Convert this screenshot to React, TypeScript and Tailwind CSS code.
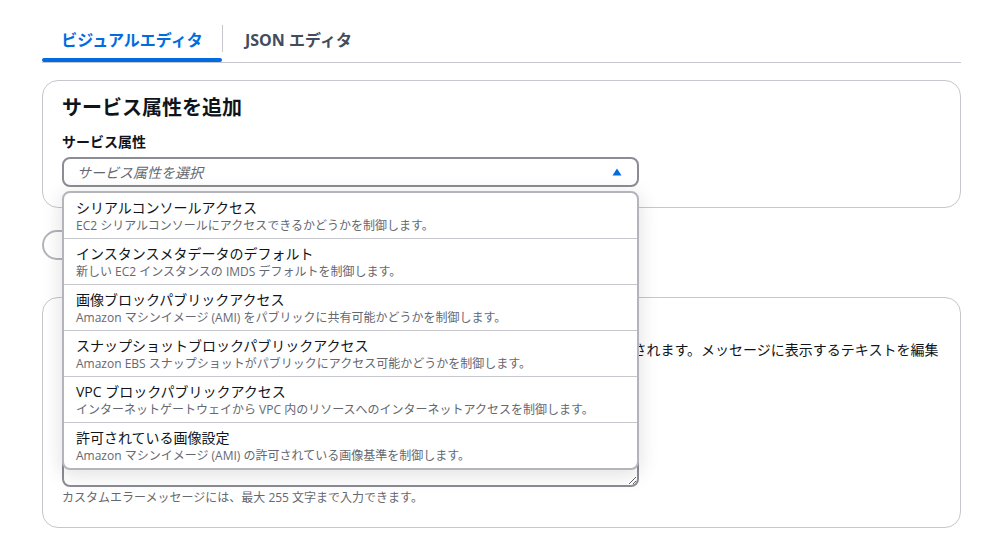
import React from 'react';

const FONT = "font-['Open_Sans','Noto_Sans_CJK_JP',sans-serif]";

const options = [
  {
    label: 'シリアルコンソールアクセス',
    description: 'EC2 シリアルコンソールにアクセスできるかどうかを制御します。',
  },
  {
    label: 'インスタンスメタデータのデフォルト',
    description: '新しい EC2 インスタンスの IMDS デフォルトを制御します。',
  },
  {
    label: '画像ブロックパブリックアクセス',
    description: 'Amazon マシンイメージ (AMI) をパブリックに共有可能かどうかを制御します。',
  },
  {
    label: 'スナップショットブロックパブリックアクセス',
    description: 'Amazon EBS スナップショットがパブリックにアクセス可能かどうかを制御します。',
  },
  {
    label: 'VPC ブロックパブリックアクセス',
    description: 'インターネットゲートウェイから VPC 内のリソースへのインターネットアクセスを制御します。',
  },
  {
    label: '許可されている画像設定',
    description: 'Amazon マシンイメージ (AMI) の許可されている画像基準を制御します。',
  },
];

const Tabs: React.FC = () => (
  <div className="flex h-[41px] border-b border-[#c6c6cd]">
    <div className="w-[180px] flex flex-col">
      <div className="flex-1 flex items-center justify-center text-[16px] font-bold text-[#006ce0]">
        ビジュアルエディタ
      </div>
      <div className="h-[4px] rounded-full bg-[#006ce0]" />
    </div>
    <div className="w-px h-[27px] mt-[3px] bg-[#c6c6cd]" />
    <div className="pl-[22px] pr-[21px] pb-[4px] flex items-center text-[16px] font-bold text-[#414d5c]">
      JSON エディタ
    </div>
  </div>
);

const ServiceDropdown: React.FC = () => (
  <div className="absolute top-[34px] left-0 right-0 z-10 bg-white border-2 border-[#b4b4bb] rounded-[8px] shadow-[0_4px_20px_1px_rgba(0,7,22,0.12)] overflow-hidden">
    {options.map((opt, i) => (
      <div
        key={opt.label}
        className={`px-[12px] pt-[5px] pb-[4px] ${i < options.length - 1 ? 'border-b border-[#c6c6cd]' : ''}`}
      >
        <div className="text-[14px] leading-[20px] text-[#0f141a]">{opt.label}</div>
        <div className="text-[12px] leading-[16px] text-[#656871]">{opt.description}</div>
      </div>
    ))}
  </div>
);

export default function App() {
  return (
    <div className={`${FONT} w-full h-[542px] overflow-hidden bg-white pl-[42px] pr-[30px] pt-[22px]`}>
      <Tabs />

      <div className="mt-[17px] rounded-[16px] border border-[#c6c6cd] px-[19px] pt-[15px] pb-[20px]">
        <h2 className="text-[20px] leading-[24px] font-bold text-[#0f141a]">サービス属性を追加</h2>
        <div className="mt-[12px] text-[14px] leading-[20px] font-bold text-[#0f141a]">サービス属性</div>
        <div className="relative mt-[5px] w-[577px]">
          <div className="h-[30px] border-2 border-[#8c8c94] rounded-[8px] flex items-center justify-between pl-[13px] pr-[15px]">
            <span className="text-[14px] italic text-[#656871]">サービス属性を選択</span>
            <svg width="10" height="8" viewBox="0 0 10 8">
              <path d="M5 0.5 L9.5 7.5 L0.5 7.5 Z" fill="#006ce0" />
            </svg>
          </div>
          <ServiceDropdown />
        </div>
      </div>

      <button className="mt-[22px] h-[30px] px-[18px] rounded-full border-2 border-[#b4b4bb] text-[14px] font-bold text-[#8c8c94] flex items-center">
        デフォルトにリセット
      </button>

      <div className="mt-[37px] rounded-[16px] border border-[#c6c6cd] px-[19px] pt-[15px] pb-[21px]">
        <h2 className="text-[20px] leading-[24px] font-bold text-[#0f141a]">カスタムエラーメッセージ</h2>
        <p className="mt-[3px] text-[14px] leading-[20px] text-[#0f141a]">
          ユーザーが、ポリシーで拒否されたアクションを実行すると、このエラーメッセージが表示されます。メッセージに表示するテキストを編集
          <br />
          できます。
        </p>
        <textarea
          className="block mt-[8px] w-[577px] h-[99px] border-2 border-[#8c8c94] rounded-[8px] resize-y px-[12px] py-[4px] text-[14px]"
          defaultValue=""
        />
        <div className="mt-[3px] text-[12px] leading-[16px] text-[#656871]">
          カスタムエラーメッセージには、最大 255 文字まで入力できます。
        </div>
      </div>
    </div>
  );
}
